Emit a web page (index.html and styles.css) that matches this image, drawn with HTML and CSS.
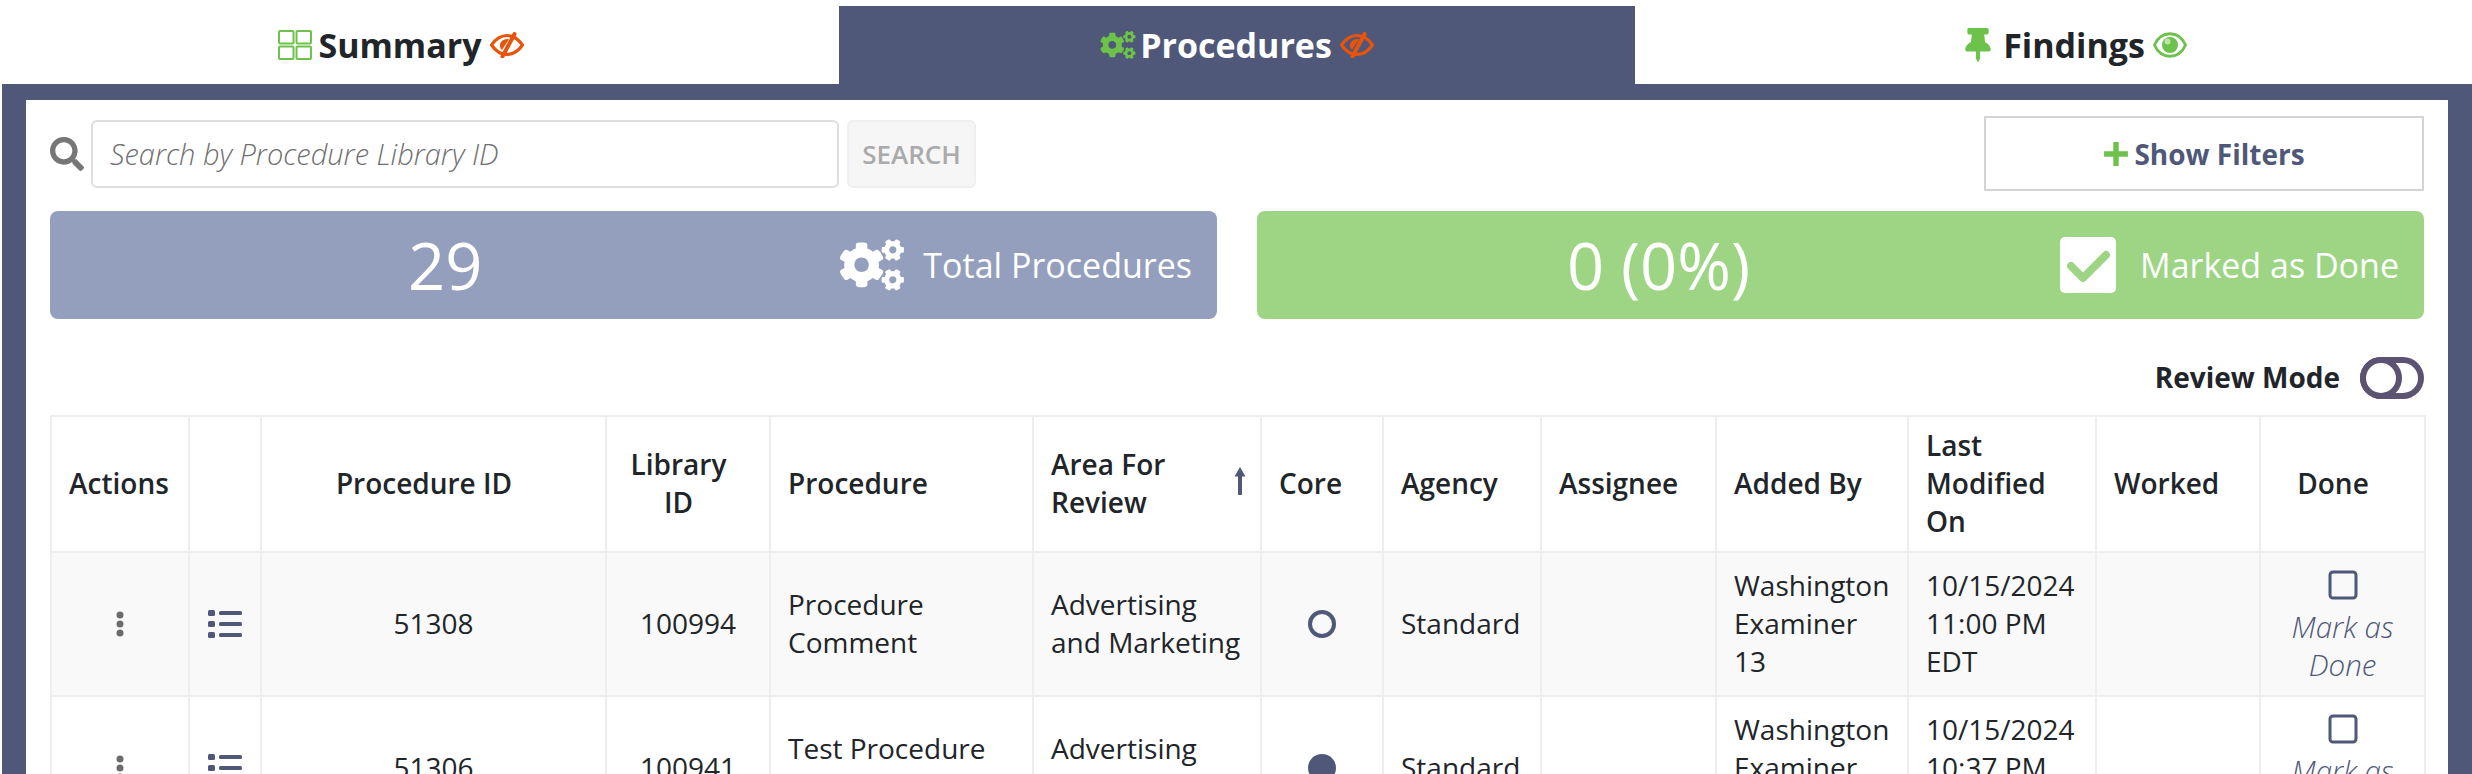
FILE: index.html
```html
<!DOCTYPE html>
<html lang="en">
<head>
<meta charset="utf-8">
<title>Procedures</title>
<link rel="stylesheet" href="styles.css">
</head>
<body>
<svg class="sprites" xmlns="http://www.w3.org/2000/svg">
  <symbol id="cogs" viewBox="0 0 640 512"><path d="M512.1 191l-8.2 14.3c-3 5.3-9.4 7.5-15.1 5.4-11.8-4.4-22.6-10.7-32.1-18.6-4.6-3.8-5.8-10.5-2.8-15.7l8.2-14.3c-6.9-8-12.3-17.3-15.9-27.4h-16.5c-6 0-11.2-4.3-12.2-10.3-2-12-2.1-24.6 0-37.1 1-6 6.2-10.4 12.2-10.4h16.5c3.6-10.1 9-19.4 15.9-27.4l-8.2-14.3c-3-5.2-1.9-11.9 2.8-15.7 9.5-7.9 20.4-14.2 32.1-18.6 5.7-2.1 12.1.1 15.1 5.4l8.2 14.3c10.5-1.9 21.2-1.9 31.7 0L552 6.3c3-5.3 9.4-7.5 15.1-5.4 11.8 4.4 22.6 10.7 32.1 18.6 4.6 3.8 5.8 10.5 2.8 15.7l-8.2 14.3c6.9 8 12.3 17.3 15.9 27.4h16.5c6 0 11.2 4.3 12.2 10.3 2 12 2.1 24.6 0 37.1-1 6-6.2 10.4-12.2 10.4h-16.5c-3.6 10.1-9 19.4-15.9 27.4l8.2 14.3c3 5.2 1.9 11.9-2.8 15.7-9.5 7.9-20.4 14.2-32.1 18.6-5.7 2.1-12.1-.1-15.1-5.4l-8.2-14.3c-10.4 1.9-21.2 1.9-31.7 0zm-10.5-58.8c38.5 29.6 82.4-14.3 52.8-52.8-38.5-29.7-82.4 14.3-52.8 52.8zM386.3 286.1l33.7 16.8c10.1 5.8 14.5 18.1 10.5 29.1-8.9 24.2-26.4 46.4-42.6 65.8-7.4 8.9-20.2 11.1-30.3 5.3l-29.1-16.8c-16 13.7-34.6 24.6-54.9 31.7v33.6c0 11.6-8.3 21.6-19.7 23.6-24.6 4.2-50.4 4.4-75.9 0-11.5-2-20-11.9-20-23.6V418c-20.3-7.2-38.9-18-54.9-31.7L74 403c-10 5.8-22.9 3.6-30.3-5.3-16.2-19.4-33.3-41.6-42.2-65.7-4-10.9.4-23.2 10.5-29.1l33.3-16.8c-3.9-20.9-3.9-42.4 0-63.4L12 205.8c-10.1-5.8-14.6-18.1-10.5-29 8.9-24.2 26-46.4 42.2-65.8 7.4-8.9 20.2-11.1 30.3-5.3l29.1 16.8c16-13.7 34.6-24.6 54.9-31.7V57.1c0-11.5 8.2-21.5 19.6-23.5 24.6-4.2 50.5-4.4 76-.1 11.5 2 20 11.9 20 23.6v33.6c20.3 7.2 38.9 18 54.9 31.7l29.1-16.8c10-5.8 22.9-3.6 30.3 5.3 16.2 19.4 33.2 41.6 42.1 65.8 4 10.9.1 23.2-10 29.1l-33.7 16.8c3.9 21 3.9 42.5 0 63.5zm-117.6 21.1c59.2-77-28.7-164.9-105.7-105.7-59.2 77 28.7 164.9 105.7 105.7zm243.4 182.7l-8.2 14.3c-3 5.3-9.4 7.5-15.1 5.4-11.8-4.4-22.6-10.7-32.1-18.6-4.6-3.8-5.8-10.5-2.8-15.7l8.2-14.3c-6.9-8-12.3-17.3-15.9-27.4h-16.5c-6 0-11.2-4.3-12.2-10.3-2-12-2.1-24.6 0-37.1 1-6 6.2-10.4 12.2-10.4h16.5c3.6-10.1 9-19.4 15.9-27.4l-8.2-14.3c-3-5.2-1.9-11.9 2.8-15.7 9.5-7.9 20.4-14.2 32.1-18.6 5.7-2.1 12.1.1 15.1 5.4l8.2 14.3c10.5-1.9 21.2-1.9 31.7 0l8.2-14.3c3-5.3 9.4-7.5 15.1-5.4 11.8 4.4 22.6 10.7 32.1 18.6 4.6 3.8 5.8 10.5 2.8 15.7l-8.2 14.3c6.9 8 12.3 17.3 15.9 27.4h16.5c6 0 11.2 4.3 12.2 10.3 2 12 2.1 24.6 0 37.1-1 6-6.2 10.4-12.2 10.4h-16.5c-3.6 10.1-9 19.4-15.9 27.4l8.2 14.3c3 5.2 1.9 11.9-2.8 15.7-9.5 7.9-20.4 14.2-32.1 18.6-5.7 2.1-12.1-.1-15.1-5.4l-8.2-14.3c-10.4 1.9-21.2 1.9-31.7 0zM501.6 431c38.5 29.6 82.4-14.3 52.8-52.8-38.5-29.6-82.4 14.3-52.8 52.8z"/></symbol>
  <symbol id="eye-off" viewBox="0 0 34 26"><path d="M1.500 13C7 5 12 3.500 17 3.500S27 5 32.500 13C27 21 22 22.500 17 22.500S7 21 1.500 13Z" fill="none" stroke="currentColor" stroke-width="3.200" stroke-linejoin="round"/><path d="M19 7C13 6.500 9.500 10 10 14.500C10.300 16 11 17 12 18C14.500 14 17 10.500 19 7Z" fill="currentColor"/><path d="M24.500 2L12.500 24.500" fill="none" stroke="currentColor" stroke-width="4" stroke-linecap="round"/></symbol>
</svg>

<nav class="tabs">
  <a class="tab tab-first">
    <svg class="tab-icon" viewBox="0 0 34 30"><g fill="none" stroke="#6cc24a" stroke-width="2"><rect x="1" y="1" width="14.500" height="12.500" rx="1"/><rect x="18.500" y="1" width="14.500" height="12.500" rx="1"/><rect x="1" y="16.500" width="14.500" height="12.500" rx="1"/><rect x="18.500" y="16.500" width="14.500" height="12.500" rx="1"/></g></svg>
    <span class="tab-label">Summary</span>
    <svg class="tab-eye eye-off"><use href="#eye-off"/></svg>
  </a>
  <a class="tab tab-active">
    <svg class="tab-icon icon-green tab-cogs"><use href="#cogs"/></svg>
    <span class="tab-label">Procedures</span>
    <svg class="tab-eye eye-off"><use href="#eye-off"/></svg>
  </a>
  <a class="tab tab-last">
    <svg class="tab-pin icon-green" viewBox="0 0 384 512"><path d="M298.028 214.267L285.793 96H328c13.255 0 24-10.745 24-24V24c0-13.255-10.745-24-24-24H56C42.745 0 32 10.745 32 24v48c0 13.255 10.745 24 24 24h42.207L85.972 214.267C37.465 236.82 0 277.261 0 328c0 13.255 10.745 24 24 24h136v104.007c0 1.242.289 2.467.845 3.578l24 48c2.941 5.882 11.364 5.893 14.311 0l24-48a8.008 8.008 0 0 0 .845-3.578V352h136c13.255 0 24-10.745 24-24-.001-51.183-37.983-91.42-85.973-113.733z"/></svg>
    <span class="tab-label">Findings</span>
    <svg class="tab-eye icon-green" viewBox="0 0 34 24"><path d="M1.500 12C8 -3 26 -3 32.500 12C26 27 8 27 1.500 12Z" fill="none" stroke="#6cc24a" stroke-width="2.800"/><circle cx="17" cy="12" r="8"/><circle cx="14.500" cy="8.500" r="3" fill="#fff" opacity=".55"/></svg>
  </a>
</nav>

<main class="panel">
  <div class="toolbar">
    <form class="search">
      <svg class="search-icon" viewBox="0 0 512 512"><path d="M505 442.7L405.3 343c-4.5-4.5-10.6-7-17-7H372c27.6-35.3 44-79.7 44-128C416 93.1 322.9 0 208 0S0 93.1 0 208s93.1 208 208 208c48.3 0 92.7-16.4 128-44v16.3c0 6.4 2.5 12.5 7 17l99.7 99.7c9.4 9.4 24.6 9.4 33.9 0l28.3-28.3c9.4-9.4 9.4-24.6.1-34zM208 336c-70.700 0-128-57.200-128-128 0-70.700 57.200-128 128-128 70.700 0 128 57.200 128 128 0 70.700-57.200 128-128 128z"/></svg>
      <input class="search-input" type="text" placeholder="Search by Procedure Library ID">
      <button class="search-btn" type="button" disabled>SEARCH</button>
    </form>
    <button class="filters-btn" type="button">
      <svg class="plus" viewBox="0 0 24 24"><path d="M12 1v22M1 12h22"/></svg>
      <span>Show Filters</span>
    </button>
  </div>

  <section class="stats">
    <div class="stat stat-blue">
      <div class="stat-num">29</div>
      <svg class="stat-cogs"><use href="#cogs"/></svg>
      <div class="stat-label">Total Procedures</div>
    </div>
    <div class="stat stat-green">
      <div class="stat-num">0 (0%)</div>
      <svg class="stat-check" viewBox="0 0 56 56"><rect width="56" height="56" rx="5" fill="#fff"/><path d="M11 29L23 41L46 18" fill="none" stroke="#9dd585" stroke-width="8" stroke-linecap="round" stroke-linejoin="round"/></svg>
      <div class="stat-label">Marked as Done</div>
    </div>
  </section>

  <div class="review">
    <span class="review-label">Review Mode</span>
    <svg class="toggle" viewBox="0 0 64 42"><rect width="64" height="42" rx="21" fill="#5c5373"/><rect x="6" y="6" width="52" height="30" rx="15" fill="#fff"/><circle cx="21" cy="21" r="18" fill="#fff" stroke="#5c5373" stroke-width="6"/></svg>
  </div>

  <table class="grid">
    <colgroup>
      <col class="c1"><col class="c2"><col class="c3"><col class="c4"><col class="c5"><col class="c6"><col class="c7"><col class="c8"><col class="c9"><col class="c10"><col class="c11"><col class="c12"><col class="c13">
    </colgroup>
    <thead>
      <tr>
        <th>Actions</th>
        <th></th>
        <th class="th-center">Procedure ID</th>
        <th class="th-center">Library ID</th>
        <th>Procedure</th>
        <th class="th-sort">Area For Review<svg class="sort" viewBox="0 0 12 28"><path d="M6 0L11.500 9.500H8V28H4V9.500H.5Z"/></svg></th>
        <th>Core</th>
        <th>Agency</th>
        <th>Assignee</th>
        <th>Added By</th>
        <th>Last Modified On</th>
        <th>Worked</th>
        <th class="th-center">Done</th>
      </tr>
    </thead>
    <tbody>
      <tr class="odd">
        <td class="center"><svg class="kebab" viewBox="0 0 8 26"><circle cx="4" cy="4" r="3.500"/><circle cx="4" cy="13" r="3.500"/><circle cx="4" cy="22" r="3.500"/></svg></td>
        <td class="center"><svg class="list" viewBox="0 0 34 28"><rect y="0" width="7" height="6" rx="1.500"/><rect y="11" width="7" height="6" rx="1.500"/><rect y="22" width="7" height="6" rx="1.500"/><rect x="11" y="1" width="23" height="4" rx="1.500"/><rect x="11" y="12" width="23" height="4" rx="1.500"/><rect x="11" y="23" width="23" height="4" rx="1.500"/></svg></td>
        <td class="center">51308</td>
        <td class="center">100994</td>
        <td>Procedure Comment</td>
        <td>Advertising and Marketing</td>
        <td class="center"><svg class="core" viewBox="0 0 28 28"><circle cx="14" cy="14" r="12" fill="none" stroke="currentColor" stroke-width="4"/></svg></td>
        <td>Standard</td>
        <td></td>
        <td>Washington Examiner 13</td>
        <td>10/15/2024 11:00 PM EDT</td>
        <td></td>
        <td class="center done"><svg class="box" viewBox="0 0 30 30"><rect x="2" y="2" width="26" height="26" rx="3" fill="none" stroke="currentColor" stroke-width="3"/></svg><em class="mark">Mark as Done</em></td>
      </tr>
      <tr>
        <td class="center"><svg class="kebab" viewBox="0 0 8 26"><circle cx="4" cy="4" r="3.500"/><circle cx="4" cy="13" r="3.500"/><circle cx="4" cy="22" r="3.500"/></svg></td>
        <td class="center"><svg class="list" viewBox="0 0 34 28"><rect y="0" width="7" height="6" rx="1.500"/><rect y="11" width="7" height="6" rx="1.500"/><rect y="22" width="7" height="6" rx="1.500"/><rect x="11" y="1" width="23" height="4" rx="1.500"/><rect x="11" y="12" width="23" height="4" rx="1.500"/><rect x="11" y="23" width="23" height="4" rx="1.500"/></svg></td>
        <td class="center">51306</td>
        <td class="center">100941</td>
        <td>Test Procedure Comment</td>
        <td>Advertising and Marketing</td>
        <td class="center"><svg class="core" viewBox="0 0 28 28"><circle cx="14" cy="14" r="14" fill="currentColor"/></svg></td>
        <td>Standard</td>
        <td></td>
        <td>Washington Examiner 13</td>
        <td>10/15/2024 10:37 PM EDT</td>
        <td></td>
        <td class="center done"><svg class="box" viewBox="0 0 30 30"><rect x="2" y="2" width="26" height="26" rx="3" fill="none" stroke="currentColor" stroke-width="3"/></svg><em class="mark">Mark as Done</em></td>
      </tr>
    </tbody>
  </table>
</main>
</body>
</html>
```

FILE: styles.css
```css
* { box-sizing: border-box; }
html, body { margin: 0; height: 100%; overflow: hidden; background: #fff; }
body { font-family: "Open Sans", "Noto Sans", sans-serif; font-size: 28px; line-height: 37.8px; color: #212529; }
.sprites { display: none; }

.tabs { display: grid; grid-template-columns: 839px 796px 837px; height: 84px; padding-top: 6px; }
.tab { display: flex; align-items: center; justify-content: center; font-size: 34px; font-weight: 700; color: #212529; }
.tab-first { padding-right: 37px; }
.tab-last { padding-left: 45px; }
.tab-active { background: #4f5878; color: #fff; }
.tab-label { line-height: 1; margin: 0 8px 0 6px; }
.tab-icon { width: 34px; height: 30px; flex: none; }
.tab-cogs { width: 36px; height: 28px; margin-right: -2px; }
.tab-pin { width: 26px; height: 34px; flex: none; margin-right: 6px; }
.tab-eye { width: 34px; height: 26px; flex: none; }
.eye-off { color: #e8540c; }
.icon-green { fill: #6cc24a; }

.panel { height: 690px; margin-left: 2px; border: solid #4f5878; border-width: 16px 24px 0; padding: 16px 24px 0; background: #fff; }

.toolbar { display: flex; justify-content: space-between; align-items: center; height: 75px; }
.search { display: flex; align-items: center; margin: 0; }
.search-icon { width: 34px; height: 34px; fill: #767676; margin-right: 7px; }
.search-input { width: 748px; height: 68px; padding: 0 17px; border: 2px solid #dedede; border-radius: 6px; font: italic 300 29px "Open Sans", sans-serif; color: #495057; background: #fff; }
.search-input::placeholder { color: #6f6f6f; opacity: 1; }
.search-btn { width: 129px; height: 68px; margin-left: 8px; padding: 0; border: 2px solid #efefef; border-radius: 6px; background: #f6f6f6; color: #aaa; font: 600 26px "Open Sans", sans-serif; }
.filters-btn { display: flex; align-items: center; justify-content: center; gap: 5px; width: 440px; height: 75px; padding: 0; border: 2px solid #d4d4d4; background: #fff; color: #4f5878; font: 700 28px "Open Sans", sans-serif; }
.plus { width: 26px; height: 26px; fill: none; stroke: #6cc24a; stroke-width: 5; }

.stats { display: grid; grid-template-columns: 1fr 1fr; column-gap: 40px; margin-top: 20px; }
.stat { display: flex; align-items: center; height: 108px; padding-right: 25px; border-radius: 8px; color: #fff; }
.stat-blue { background: #949fbd; }
.stat-green { background: #9dd585; }
.stat-num { flex: 1; text-align: center; font-size: 65px; font-weight: 400; line-height: 1; }
.stat-cogs { width: 64px; height: 52px; fill: #fff; flex: none; margin-right: 19px; }
.stat-check { width: 56px; height: 56px; flex: none; margin-right: 24px; }
.stat-label { font-size: 34px; line-height: 1; font-weight: 400; }

.review { display: flex; justify-content: flex-end; align-items: center; gap: 20px; height: 42px; margin-top: 38px; }
.review-label { font-weight: 700; }
.toggle { width: 64px; height: 42px; }

.grid { width: 2374px; margin-top: 16px; border-collapse: collapse; table-layout: fixed; }
.c1 { width: 138px; } .c2 { width: 72px; } .c3 { width: 345px; } .c4 { width: 164px; } .c5 { width: 263px; }
.c6 { width: 228px; } .c7 { width: 122px; } .c8 { width: 158px; } .c9 { width: 175px; } .c10 { width: 192px; }
.c11 { width: 188px; } .c12 { width: 164px; } .c13 { width: 165px; }
.grid th, .grid td { padding: 10px 17px; border: 2px solid #eee; vertical-align: middle; text-align: left; }
.grid th { height: 136px; font-weight: 600; position: relative; }
.grid td { height: 144px; }
.grid .th-center { text-align: center; padding-right: 36px; }
.grid .th-sort { padding-right: 50px; }
.grid .center { text-align: center; }
.grid .done { padding-left: 10px; padding-right: 10px; }
.odd td { background: #f9f9f9; }
.sort { position: absolute; right: 14px; top: 50px; width: 12px; height: 28px; fill: #4f5878; }
.kebab { display: block; width: 8px; height: 26px; margin: 0 auto; fill: #6c6c6c; }
.list { display: block; width: 34px; height: 28px; margin: 0 auto; fill: #4f5878; }
.core { display: block; width: 28px; height: 28px; margin: 0 auto; color: #4f5878; }
.box { display: block; width: 30px; height: 30px; margin: 5px auto 8px; color: #4f5878; }
.mark { display: block; color: #4f5878; font-size: 29.5px; font-weight: 300; }
```
